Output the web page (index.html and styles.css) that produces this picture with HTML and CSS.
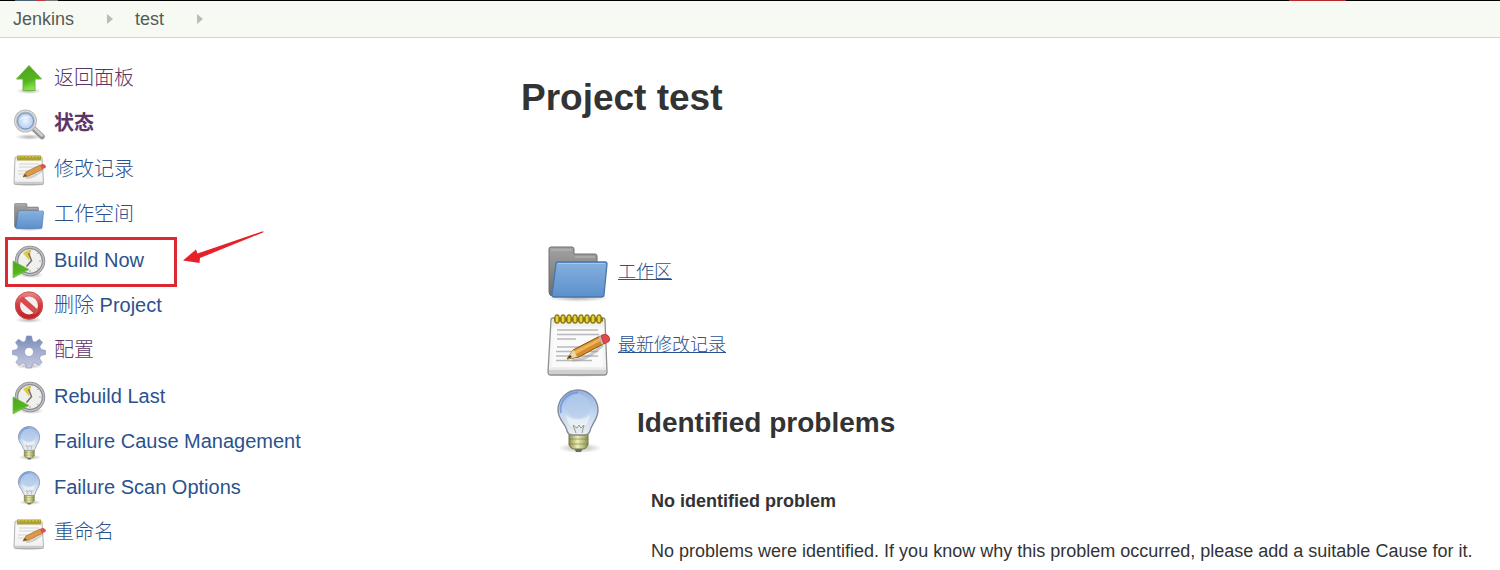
FILE: index.html
```html
<!DOCTYPE html>
<html lang="zh-CN">
<head>
<meta charset="utf-8">
<title>test [Jenkins]</title>
<link rel="stylesheet" href="styles.css">
</head>
<body>
<svg class="defs" aria-hidden="true">
  <defs>
    <linearGradient id="gGreen" x1="0" y1="0" x2="0.3" y2="1"><stop offset="0" stop-color="#4ba31c"/><stop offset="0.7" stop-color="#55b51f"/><stop offset="1" stop-color="#8be04e"/></linearGradient>
    <linearGradient id="gBlue" x1="0" y1="0" x2="0" y2="1"><stop offset="0" stop-color="#86b0df"/><stop offset="1" stop-color="#5c90cb"/></linearGradient>
    <linearGradient id="gGrey" x1="0" y1="0" x2="0" y2="1"><stop offset="0" stop-color="#a2a2a2"/><stop offset="1" stop-color="#6c6c6c"/></linearGradient>
    <linearGradient id="gPaper" x1="0" y1="0" x2="0" y2="1"><stop offset="0" stop-color="#e2e2de"/><stop offset="0.2" stop-color="#fafafa"/><stop offset="0.85" stop-color="#f3f3f3"/><stop offset="1" stop-color="#d2d2d2"/></linearGradient>
    <linearGradient id="gBulb" x1="0" y1="0" x2="0" y2="1"><stop offset="0" stop-color="#91b2e4"/><stop offset="0.6" stop-color="#c9dbf1"/><stop offset="1" stop-color="#efefec"/></linearGradient>
    <linearGradient id="gBase" x1="0" y1="0" x2="1" y2="0"><stop offset="0" stop-color="#8c904d"/><stop offset="0.45" stop-color="#edf0b4"/><stop offset="1" stop-color="#8c904d"/></linearGradient>
    <linearGradient id="gRed" x1="0" y1="0" x2="0" y2="1"><stop offset="0" stop-color="#e48080"/><stop offset="0.5" stop-color="#d23a3d"/><stop offset="1" stop-color="#be2528"/></linearGradient>
    <linearGradient id="gGear" x1="0" y1="0" x2="0" y2="1"><stop offset="0" stop-color="#7488b4"/><stop offset="0.5" stop-color="#a4aed0"/><stop offset="1" stop-color="#c3c9df"/></linearGradient>
    <radialGradient id="gLens"><stop offset="0" stop-color="#eef5fe"/><stop offset="1" stop-color="#a4c2eb"/></radialGradient>
    <radialGradient id="gShadow"><stop offset="0" stop-color="#000" stop-opacity="0.3"/><stop offset="1" stop-color="#000" stop-opacity="0"/></radialGradient>
  </defs>
  <symbol id="up" viewBox="0 0 34 34">
    <ellipse cx="17" cy="29" rx="13" ry="3" fill="url(#gShadow)"/>
    <path d="M17 3.500 29.500 17H23v11.500H11V17H4.500z" fill="url(#gGreen)" stroke="#6cb545"/>
  </symbol>
  <symbol id="search" viewBox="0 0 34 34">
    <ellipse cx="17" cy="29" rx="14" ry="3" fill="url(#gShadow)"/>
    <path d="M22 21 30 28.500" stroke="#959595" stroke-width="5.500" stroke-linecap="round"/>
    <path d="M22 20 30 27.500" stroke="#cfcfcf" stroke-width="2.500" stroke-linecap="round"/>
    <circle cx="13.500" cy="13" r="10" fill="url(#gLens)" stroke="#bbb" stroke-width="3"/>
    <circle cx="13.500" cy="13" r="10" fill="none" stroke="#e4e4e4" stroke-width="1"/>
    <circle cx="13.500" cy="13" r="8" fill="none" stroke="#6e93cc" stroke-width="1"/>
    <path d="M8 12a6 5 0 0 1 10-3c-3 3-6 1-10 3z" fill="#fff" opacity="0.5"/>
  </symbol>
  <symbol id="note" viewBox="0 0 64 64">
    <ellipse cx="32" cy="61" rx="31" ry="3" fill="url(#gShadow)"/>
    <path d="M7 5h50q2 0 2 2l2 52q0 3-3 3H5q-3 0-3-3L5 7q0-2 2-2z" fill="url(#gPaper)" stroke="#8e8e8a" stroke-width="1.300"/>
    <path d="M3 57h57v2q0 2-2 2H5q-2 0-2-2z" fill="#cfcfcf"/>
    <path d="M9 15h46l2 39H6z" fill="#fafafa"/>
    <path d="M11 17h41M11 21.500h42M11 26h19M11 34h42M10 38.500h42M10 43h42M10 47.500h36" stroke="#b9b9b9" stroke-width="1.600"/>
    <path d="M8 6.500h49" stroke="#867710" stroke-width="4"/>
    <g fill="#e6d33b" stroke="#8b7a0d" stroke-width="1.300"><rect x="9" y="2" width="4" height="8" rx="2"/><rect x="15" y="2" width="4" height="8" rx="2"/><rect x="21" y="2" width="4" height="8" rx="2"/><rect x="27" y="2" width="4" height="8" rx="2"/><rect x="33" y="2" width="4" height="8" rx="2"/><rect x="39" y="2" width="4" height="8" rx="2"/><rect x="45" y="2" width="4" height="8" rx="2"/><rect x="51" y="2" width="4" height="8" rx="2"/></g>
    <path d="M26 47c14 1 24-9 31-15" fill="none" stroke="#999" stroke-width="3" opacity="0.5"/>
    <path d="M21 46l6-9 27-14 5 7-26 14z" fill="#d68c2c" stroke="#8a5410"/>
    <path d="M28 38l26-13 2 2-26 14z" fill="#eeb45c"/>
    <path d="M21 46l6-9 2 2 2 5z" fill="#efd6a4"/><path d="M21 46l3-4 2 2z" fill="#333"/>
    <path d="M54 23l3 8" stroke="#b9b9b9" stroke-width="3"/>
    <path d="M55 22.500q4-2.500 7 0 3 3 1 6l-5 2.500z" fill="#e5494a" stroke="#b52d2d" stroke-width="0.800"/>
  </symbol>
  <symbol id="note-small" viewBox="0 0 34 34">
    <ellipse cx="17" cy="31.500" rx="16" ry="2" fill="url(#gShadow)"/>
    <path d="M4 4h25q1 0 1 1l1.500 25q0 1.500-1.500 1.500H4Q2 31.500 2 30L3 5q0-1 1-1z" fill="url(#gPaper)" stroke="#a9a9a6" stroke-width="0.900"/>
    <path d="M2.500 29h28.500v2H2.500z" fill="#cbcbcb"/>
    <path d="M7 11h20M7 14h20M6 18h18M6 21h18" stroke="#d2d2d2"/>
    <path d="M5 2.500h24v5H5z" fill="#ada132"/>
    <path d="M6 3.500h22" stroke="#cfc24e" stroke-width="2" stroke-dasharray="2 1.500"/>
    <path d="M14 25c7 0 12-4 17-8" fill="none" stroke="#999" stroke-width="2" opacity="0.4"/>
    <path d="M11 24l3-5 14-7 3 4-14 7z" fill="#dc9a48" stroke="#a0682a" stroke-width="0.700"/>
    <path d="M11 24l2-3 2 2z" fill="#665238"/>
    <path d="M28 12q3-2 5 0t0 3l-3 1.500z" fill="#dd5351"/>
  </symbol>
  <symbol id="folder" viewBox="0 0 64 64">
    <ellipse cx="32" cy="58" rx="31" ry="4" fill="url(#gShadow)"/>
    <path d="M3 9q0-2 2-2h21q2 0 2 2v5h21q2 0 2 2v33H8l-1 7q-4 0-4-4z" fill="url(#gGrey)" stroke="#6f6f6f"/>
    <path d="M5 10h20M29 17h20" stroke="#bcbcbc"/>
    <path d="M12 22h47q2 0 2 2l-3 31q0 2-3 2H8q-2 0-2-2l4-31q0-2 2-2z" fill="url(#gBlue)" stroke="#4677b0" stroke-width="1.300"/>
    <path d="M12 23.500h46.500" stroke="#a9c9ec"/>
  </symbol>
  <symbol id="clock" viewBox="0 0 34 34">
    <ellipse cx="19" cy="31" rx="13" ry="3" fill="url(#gShadow)"/>
    <circle cx="18" cy="17" r="13.500" fill="#f0f0ec" stroke="#8b8b93" stroke-width="3.500"/>
    <circle cx="18" cy="17" r="13.700" fill="none" stroke="#bdbdc2" stroke-width="1.500"/>
    <path d="M17 16.500 11 9q3-3 8-3z" fill="#decb4b"/>
    <path d="M16.500 9l3 7.500-5 6" fill="none" stroke="#77777b" stroke-width="1.600"/>
    <path d="M18 6v2M27 17h2M18 26v2M25 10l1-1M25 24l1 1" stroke="#aaa"/>
    <path d="M1 17 17 25.500 1 34z" fill="url(#gGreen)" stroke="#74be50" stroke-width="0.800"/>
  </symbol>
  <symbol id="forbid" viewBox="0 0 34 34">
    <ellipse cx="17" cy="31" rx="14" ry="3" fill="url(#gShadow)"/>
    <circle cx="17" cy="16.500" r="11.500" fill="#f4eeee" stroke="url(#gRed)" stroke-width="5"/>
    <path d="M9 9.500 25 23.500" stroke="#d54c4e" stroke-width="5.500"/>
    <circle cx="17" cy="16.500" r="13.600" fill="none" stroke="#c95457" stroke-width="0.800"/>
  </symbol>
  <symbol id="gear" viewBox="0 0 34 34">
    <ellipse cx="17" cy="31" rx="14" ry="3" fill="url(#gShadow)"/>
    <path fill="url(#gGear)" stroke="#8c98bc" stroke-width="0.700" fill-rule="evenodd" d="M14.500 1h5l1 5 2.700 1.200L27.500 4.200l3 3.200-2.800 4.100 1.300 3 4.500 1v4l-4.800 1-1.200 2.900 2.500 4-3 3-4-2.500-2.600 1.100-1 4h-4.800l-1-4-2.700-1.100-4 2.500-3-3 2.600-4L5.300 20.500.5 19.500v-4l4.600-1 1.200-3L3.500 7.400l3-3.200 4.400 3L13.500 6zM17 12.500a4.500 4.500 0 1 0 .01 0z"/>
  </symbol>
  <symbol id="bulb" viewBox="0 0 64 64">
    <ellipse cx="34" cy="59" rx="22" ry="5" fill="url(#gShadow)"/>
    <path d="M28 59l2 4h5l2-4z" fill="#6a6a66"/>
    <path d="M23 45h19v11q-2 4-5 4h-9q-3 0-5-4z" fill="url(#gBase)" stroke="#75784a"/>
    <path d="M23 50h19M23 55h19" stroke="#777b3c" stroke-width="1.300" opacity="0.4"/>
    <path d="M32 1c11 0 20 9 20 20 0 10-7 14-8 21-1 3-3 4-6 4H27c-3 0-5-1-6-4-1-7-9-11-9-21C12 10 21 1 32 1z" fill="url(#gBulb)" stroke="#828b99" stroke-width="1.400"/>
    <path d="M32 3.500A17 17 0 0 0 15 24" fill="none" stroke="#668ddd" stroke-width="2" opacity="0.7"/>
    <circle cx="32" cy="17" r="12" fill="#b6cde9" opacity="0.65"/>
    <path d="M20 26q12 9 24 0-2 9-6 12H26q-5-4-6-12z" fill="#fff" opacity="0.45"/>
    <path d="M30 44l-3-8 4 3 2-3 2 3 3-3-2 8" fill="none" stroke="#969b8d"/>
  </symbol>
</svg>
<div class="strip"><span class="strip-logo"></span><span class="strip-alert"></span></div>
<nav class="crumbs" aria-label="Breadcrumb">
  <a href="#">Jenkins</a><span class="sep"></span><a href="#">test</a><span class="sep"></span>
</nav>
<div class="page">
  <nav class="side" aria-label="Project">
    <ul class="tasks">
      <li><a class="visited" href="#"><svg class="icon"><use href="#up"/></svg>返回面板</a></li>
      <li><a class="visited current" href="#"><svg class="icon"><use href="#search"/></svg>状态</a></li>
      <li><a href="#"><svg class="icon"><use href="#note-small"/></svg>修改记录</a></li>
      <li><a href="#"><svg class="icon snug"><use href="#folder"/></svg>工作空间</a></li>
      <li class="marked"><a href="#"><svg class="icon"><use href="#clock"/></svg>Build Now</a>
        <svg class="arrow" viewBox="0 0 82 36" aria-hidden="true"><path d="M0 29.500 13 18.500 14.500 22.500 79 .5q3-.5 1 1L17 27l-.5 5z" fill="#e8202a"/></svg>
      </li>
      <li><a href="#"><svg class="icon"><use href="#forbid"/></svg>删除 Project</a></li>
      <li><a class="visited" href="#"><svg class="icon"><use href="#gear"/></svg>配置</a></li>
      <li><a href="#"><svg class="icon"><use href="#clock"/></svg>Rebuild Last</a></li>
      <li><a href="#"><svg class="icon"><use href="#bulb"/></svg>Failure Cause Management</a></li>
      <li><a href="#"><svg class="icon"><use href="#bulb"/></svg>Failure Scan Options</a></li>
      <li><a href="#"><svg class="icon"><use href="#note-small"/></svg>重命名</a></li>
    </ul>
  </nav>
  <main class="main">
    <h1>Project test</h1>
    <div class="entry"><svg class="big"><use href="#folder"/></svg><a href="#">工作区</a></div>
    <div class="entry"><svg class="big"><use href="#note"/></svg><a href="#">最新修改记录</a></div>
    <section>
      <div class="entry problems"><svg class="big"><use href="#bulb"/></svg><h2>Identified problems</h2></div>
      <div class="details">
        <h3>No identified problem</h3>
        <p>No problems were identified. If you know why this problem occurred, please add a suitable Cause for it.</p>
      </div>
    </section>
  </main>
</div>
</body>
</html>
```
FILE: styles.css
```css
*, *::after { box-sizing: border-box; }
body {
  margin: 0;
  background: #fff;
  color: #333;
  font-family: "Liberation Sans", "Noto Sans CJK SC", sans-serif;
  font-size: 18px;
  line-height: 24px;
}
h1, h2, h3, p, ul { margin: 0; padding: 0; }
.defs { position: absolute; width: 0; height: 0; }
.strip {
  display: flex;
  justify-content: space-between;
  height: 1px;
  padding: 0 154px 0 15px;
  background: #000;
}
.strip-logo { width: 43px; background: linear-gradient(90deg, #4a6378 50%, #b63a40 50% 70%, #777 70%); }
.strip-alert { width: 57px; background: #b5282e; }
.crumbs {
  display: flex;
  align-items: center;
  height: 37px;
  padding-left: 13px;
  background: #f6faf2;
  border-bottom: 1px solid #d3d7cf;
}
.crumbs a { color: #555a55; text-decoration: none; }
.sep {
  margin: 0 22px 0 33px;
  border: 5px solid transparent;
  border-left: 6px solid #babdb6;
  border-right: 0;
}
.crumbs .sep:last-child { margin-right: 0; }
.page { display: flex; }
.side { flex: 0 0 521px; padding-top: 17px; }
.tasks {
  display: grid;
  grid-auto-rows: 1fr;
  min-height: 500px;
  list-style: none;
  font-size: 20px;
  font-weight: 300;
}
.tasks li { display: flex; align-items: center; padding-left: 12px; }
.tasks a {
  display: flex;
  align-items: center;
  gap: 8px;
  color: #2a528d;
  text-decoration: none;
}
.tasks .visited { color: #5c3566; }
.tasks .current { font-weight: bold; }
.icon { width: 34px; height: 34px; margin-top: 3px; }
.snug { padding: 1px; }
.marked { position: relative; }
.marked::after {
  content: "";
  position: absolute;
  left: 5px;
  top: 0;
  width: 172px;
  height: 50px;
  border: 3px solid #dc2831;
  pointer-events: none;
}
.arrow { position: absolute; left: 183px; top: -6px; width: 82px; height: 36px; }
.main { flex: 1; min-width: 0; padding: 39px 4px 0 0; }
h1 { margin-bottom: 121px; font-size: 37px; line-height: 42px; }
.entry { display: flex; align-items: center; gap: 8px; margin: 0 0 9px 25px; }
.entry a { color: #2a528d; font-weight: 300; }
.big { width: 64px; height: 64px; }
.problems { gap: 27px; margin: 12px 0 36px 25px; }
h2 { padding-top: 4px; font-size: 28px; line-height: 32px; }
.details { padding-left: 130px; }
h3 { margin-bottom: 26px; font-size: 18px; line-height: 24px; }
```
